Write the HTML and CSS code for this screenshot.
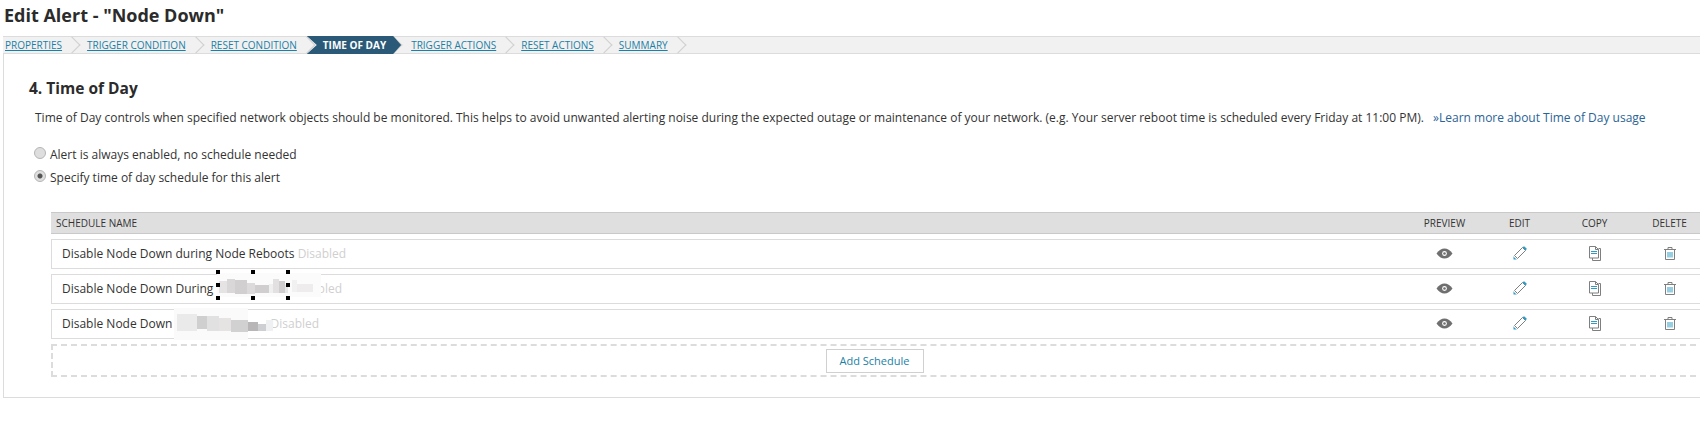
FILE: index.html
```html
<!DOCTYPE html>
<html lang="en">
<head>
    <meta charset="UTF-8">
    <title>Edit Alert - "Node Down"</title>
    <link rel="stylesheet" href="styles.css">
</head>
<body>
    <svg class="icon-defs" width="0" height="0">
        <symbol id="icon-eye" viewBox="0 0 17 11">
            <path d="M0.5 5.5C3 2 5.6 0.5 8.5 0.5S14 2 16.5 5.5C14 9 11.4 10.5 8.5 10.5S3 9 0.5 5.5Z" fill="#6f6f6f"/>
            <circle cx="8.5" cy="5.5" r="2.4" fill="#fff"/>
            <circle cx="8.5" cy="5.5" r="1.3" fill="#6f6f6f"/>
        </symbol>
        <symbol id="icon-edit" viewBox="0 0 14 14">
            <path d="M1.5 9.5L9.5 1.5L12.5 4.5L4.5 12.5Z" fill="#fff" stroke="#7f7f7f"/>
            <path d="M10.5 0.5L11.5 0.5L13.5 2.5L13.5 3.5L12.5 4.5L9.5 1.5Z" fill="#2f9cc4"/>
            <path d="M0.5 10V13.5H4L2.8 12.8L1.2 11.2Z" fill="#2f9cc4"/>
        </symbol>
        <symbol id="icon-copy" viewBox="0 0 12 15">
            <path d="M11.5 3.5V14.5H3.5V12" fill="none" stroke="#7f7f7f"/>
            <path d="M0.5 0.5H6.5L9.5 3.5V12H0.5Z" fill="#fff" stroke="#7f7f7f"/>
            <path d="M6.5 0.5V3.5H9.5M9.5 2.5H11.5V4" fill="none" stroke="#7f7f7f"/>
            <path d="M2 5.5H8M2 7.5H8" stroke="#2f9cc4"/>
        </symbol>
        <symbol id="icon-trash" viewBox="0 0 12 13">
            <path d="M0 2.5H12" stroke="#7f7f7f"/>
            <path d="M4 2V0.5H8V2" fill="none" stroke="#7f7f7f"/>
            <path d="M1.5 2.5V12.5H10.5V2.5" fill="none" stroke="#7f7f7f"/>
            <path d="M4 5V10.5M6 5V10.5M8 5V10.5" stroke="#2f9cc4"/>
        </symbol>
    </svg>

    <h1 class="page-title">Edit Alert - "Node Down"</h1>

    <nav class="steps">
        <a class="step" href="#">Properties</a>
        <a class="step" href="#">Trigger Condition</a>
        <a class="step" href="#">Reset Condition</a>
        <a class="step active" href="#">Time of Day</a>
        <a class="step" href="#">Trigger Actions</a>
        <a class="step" href="#">Reset Actions</a>
        <a class="step" href="#">Summary</a>
    </nav>

    <main class="panel">
        <h2 class="section-title">4. Time of Day</h2>
        <p class="intro">Time of Day controls when specified network objects should be monitored. This helps to avoid unwanted alerting noise during the expected outage or maintenance of your network. (e.g. Your server reboot time is scheduled every Friday at 11:00 PM). <a class="learn-more" href="#">&raquo;Learn more about Time of Day usage</a></p>

        <div class="radio-group">
            <label class="radio-row"><span class="radio"></span>Alert is always enabled, no schedule needed</label>
            <label class="radio-row"><span class="radio checked"></span>Specify time of day schedule for this alert</label>
        </div>

        <section class="schedules">
            <div class="table-head">
                <span class="col-name">Schedule Name</span>
                <span class="col-action">Preview</span>
                <span class="col-action">Edit</span>
                <span class="col-action">Copy</span>
                <span class="col-action">Delete</span>
            </div>

            <div class="table-row">
                <span class="col-name">Disable Node Down during Node Reboots <em class="state">Disabled</em></span>
                <span class="col-action"><svg class="eye"><use href="#icon-eye"/></svg></span>
                <span class="col-action"><svg class="edit"><use href="#icon-edit"/></svg></span>
                <span class="col-action"><svg class="copy"><use href="#icon-copy"/></svg></span>
                <span class="col-action"><svg class="trash"><use href="#icon-trash"/></svg></span>
            </div>

            <div class="table-row">
                <span class="col-name">Disable Node Down During <span class="hidden-name name-two"></span><em class="state">Disabled</em></span>
                <span class="col-action"><svg class="eye"><use href="#icon-eye"/></svg></span>
                <span class="col-action"><svg class="edit"><use href="#icon-edit"/></svg></span>
                <span class="col-action"><svg class="copy"><use href="#icon-copy"/></svg></span>
                <span class="col-action"><svg class="trash"><use href="#icon-trash"/></svg></span>
                <!-- blurred bit with the selection handles on top -->
                <svg class="blur blur-two" width="106" height="30" viewBox="0 0 106 30" shape-rendering="crispEdges">
                    <rect x="1" y="3" width="104" height="24" fill="#fbfbfb"/>
                    <rect x="3" y="11" width="8" height="12" fill="#e6e3e4"/>
                    <rect x="11" y="9" width="8" height="14" fill="#dad7d8"/>
                    <rect x="19" y="10" width="12" height="14" fill="#d2cfd0"/>
                    <rect x="31" y="13" width="8" height="11" fill="#dcdadb"/>
                    <rect x="39" y="15" width="14" height="8" fill="#d0cecf"/>
                    <rect x="53" y="14" width="4" height="9" fill="#f0efef"/>
                    <rect x="57" y="9" width="6" height="14" fill="#e2e0e1"/>
                    <rect x="63" y="11" width="6" height="12" fill="#cfcdce"/>
                    <rect x="69" y="15" width="3" height="8" fill="#e8e7e7"/>
                    <rect x="76" y="10" width="5" height="12" fill="#f2f1f2"/>
                    <rect x="81" y="14" width="16" height="8" fill="#efeced"/>
                    <rect x="0" y="0" width="4" height="4" fill="#000"/>
                    <rect x="35" y="0" width="4" height="4" fill="#000"/>
                    <rect x="70" y="0" width="4" height="4" fill="#000"/>
                    <rect x="0" y="13" width="4" height="4" fill="#000"/>
                    <rect x="70" y="13" width="4" height="4" fill="#000"/>
                    <rect x="0" y="26" width="4" height="4" fill="#000"/>
                    <rect x="35" y="26" width="4" height="4" fill="#000"/>
                    <rect x="70" y="26" width="4" height="4" fill="#000"/>
                </svg>
            </div>

            <div class="table-row">
                <span class="col-name">Disable Node Down <span class="hidden-name name-three"></span><em class="state">Disabled</em></span>
                <span class="col-action"><svg class="eye"><use href="#icon-eye"/></svg></span>
                <span class="col-action"><svg class="edit"><use href="#icon-edit"/></svg></span>
                <span class="col-action"><svg class="copy"><use href="#icon-copy"/></svg></span>
                <span class="col-action"><svg class="trash"><use href="#icon-trash"/></svg></span>
                <svg class="blur blur-three" width="100" height="36" viewBox="0 0 100 36" shape-rendering="crispEdges">
                    <rect x="0" y="2" width="74" height="32" fill="#fafafa"/>
                    <rect x="3" y="8" width="20" height="17" fill="#eaeaea"/>
                    <rect x="23" y="10" width="10" height="13" fill="#d0cfcf"/>
                    <rect x="33" y="10" width="12" height="15" fill="#e2e1e1"/>
                    <rect x="45" y="12" width="12" height="13" fill="#e6e4e3"/>
                    <rect x="57" y="14" width="17" height="12" fill="#d2d1d2"/>
                    <rect x="74" y="16" width="10" height="9" fill="#b9b6b7"/>
                    <rect x="84" y="18" width="8" height="7" fill="#cdcfd2"/>
                    <rect x="92" y="14" width="7" height="11" fill="#eef0f2"/>
                </svg>
            </div>

            <div class="add-row">
                <button class="add-button" type="button">Add Schedule</button>
            </div>
        </section>
    </main>
</body>
</html>
```

FILE: styles.css
```css
/* --- Basics --- */
body {
    margin: 0;
    background-color: #fff;
    color: #333;
    font-family: "Open Sans", "Noto Sans", sans-serif;
    font-size: 12px;
    overflow: hidden;
}

a {
    color: #1b7fa6;
}

.icon-defs {
    position: absolute;
}

.page-title {
    margin: 0;
    padding: 2px 0 0 4px;
    height: 36px;
    box-sizing: border-box;
    font-size: 18px;
    line-height: 26px;
    font-weight: 700;
    color: #2b2b2b;
}

/* --- Wizard steps --- */
.steps {
    display: flex;
    align-items: stretch;
    height: 18px;
    margin-left: 3px;
    box-sizing: border-box;
    background-color: #f1f1f1;
    border-top: 1px solid #dcdcdc;
    border-bottom: 1px solid #dcdcdc;
}

.step {
    position: relative;
    display: flex;
    align-items: center;
    padding: 0 11px 0 14px;
    font-size: 10px;
    text-transform: uppercase;
    white-space: nowrap;
}

.step:first-child {
    padding-left: 2px;
}

/* chevron after every step */
.step::after,
.step.active + .step::before {
    content: "";
    position: absolute;
    top: 2px;
    right: -5px;
    width: 12px;
    height: 12px;
    box-sizing: border-box;
    border-top: 1px solid #cfcfcf;
    border-right: 1px solid #cfcfcf;
    transform: rotate(45deg);
}

.step.active + .step::before {
    right: auto;
    left: -9px;
}

.step.active {
    z-index: 1;
    margin: -1px -4px -1px -1px;
    padding: 0 15px 0 16px;
    color: #fff;
    font-weight: 700;
    text-decoration: none;
    background-color: #2a5a78;
    clip-path: polygon(0 0, calc(100% - 8px) 0, 100% 50%, calc(100% - 8px) 100%, 0 100%, 10px 50%);
}

.step.active::after {
    display: none;
}

/* --- Main panel --- */
.panel {
    margin-left: 3px;
    height: 344px;
    box-sizing: border-box;
    border-left: 1px solid #dcdcdc;
    border-bottom: 1px solid #dcdcdc;
    padding-top: 24px;
}

.section-title {
    margin: 0 0 0 25px;
    font-size: 15.5px;
    line-height: 20px;
    font-weight: 700;
    color: #2b2b2b;
}

.intro {
    margin: 10px 0 0 31px;
    line-height: 20px;
    white-space: nowrap;
}

.learn-more {
    margin-left: 6px;
    color: #2a6496;
    text-decoration: none;
}

/* --- Radios --- */
.radio-group {
    display: flex;
    flex-direction: column;
    gap: 5px;
    margin: 17px 0 0 30px;
}

.radio-row {
    display: flex;
    align-items: center;
    height: 18px;
    gap: 4px;
}

.radio {
    width: 12px;
    height: 12px;
    box-sizing: border-box;
    margin-top: -2px;
    border: 1px solid #b5b5b5;
    border-radius: 50%;
    background-color: #dedede;
}

.radio.checked {
    background: radial-gradient(circle, #555 0, #555 2px, #dedede 3px);
}

/* --- Schedule table --- */
.schedules {
    margin: 26px -7px 0 47px;
}

.table-head,
.table-row {
    display: flex;
    align-items: center;
}

.table-head {
    height: 22px;
    box-sizing: border-box;
    background-color: #dfdfdf;
    border-top: 1px solid #c9c9c9;
    border-bottom: 1px solid #c9c9c9;
    font-size: 10px;
    text-transform: uppercase;
}

.table-head .col-name {
    padding-left: 5px;
}

.col-name {
    flex: 1;
    white-space: nowrap;
}

.col-action {
    display: flex;
    justify-content: center;
    align-items: center;
    width: 75px;
}

.table-row {
    position: relative;
    height: 30px;
    margin-top: 5px;
    box-sizing: border-box;
    border: 1px solid #dcdcdc;
    border-width: 1px 0 1px 1px;
}

.table-row .col-name {
    padding-left: 10px;
    margin-bottom: 2px;
}

.table-row svg:not(.blur) {
    margin-bottom: 2px;
}

.state {
    font-style: normal;
    color: #cfcfcf;
}

.hidden-name {
    display: inline-block;
}

.name-two {
    width: 77px;
}

.name-three {
    width: 95px;
}

.eye {
    width: 17px;
    height: 11px;
}

.edit {
    width: 14px;
    height: 14px;
}

.copy {
    width: 12px;
    height: 15px;
}

.trash {
    width: 12px;
    height: 13px;
}

.blur {
    position: absolute;
}

.blur-two {
    left: 164px;
    top: -5px;
}

.blur-three {
    left: 122px;
    top: -4px;
}

/* --- Add row --- */
.add-row {
    display: flex;
    justify-content: center;
    align-items: center;
    height: 33px;
    margin: 5px 11px 0 0;
    box-sizing: border-box;
    border: 2px dashed #dcdcdc;
    border-right: 0;
}

.add-button {
    width: 98px;
    height: 24px;
    padding: 0;
    font-family: inherit;
    font-size: 11px;
    color: #1b7fa6;
    background-color: #fff;
    border: 1px solid #d0d0d0;
}
```
